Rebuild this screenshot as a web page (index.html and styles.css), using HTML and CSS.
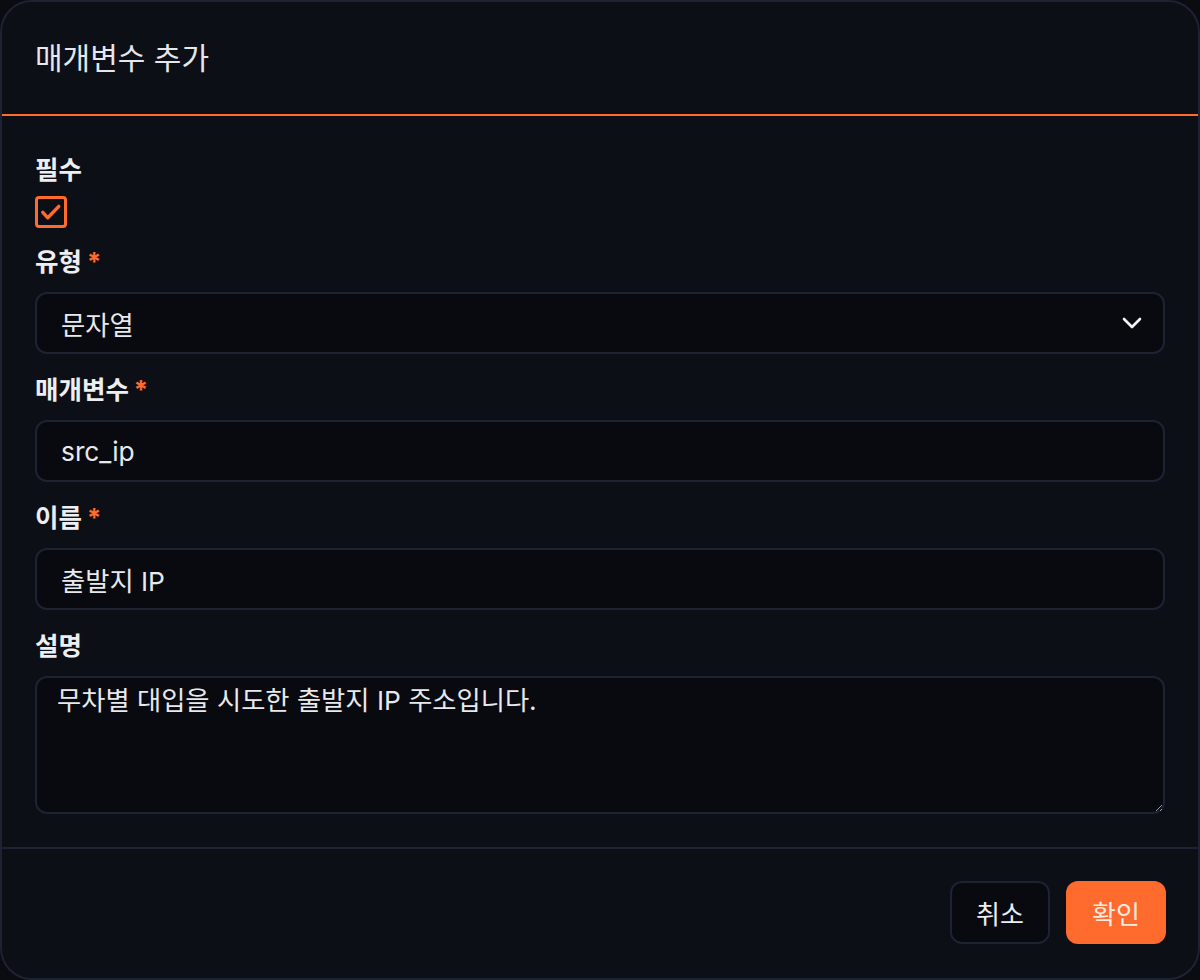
FILE: index.html
```html
<!DOCTYPE html>
<html lang="ko">
<head>
<meta charset="utf-8">
<title>매개변수 추가</title>
<link rel="stylesheet" href="styles.css">
</head>
<body>
<div class="modal">
  <div class="modal-header">
    <h2 class="modal-title">매개변수 추가</h2>
  </div>
  <div class="modal-body">
    <div class="field field-check">
      <span class="label">필수</span>
      <span class="checkbox">
        <svg width="26" height="26" viewBox="0 0 26 26"><polyline points="4.8,13.3 9.8,18.8 20.8,7.4" fill="none" stroke="#ff6b2c" stroke-width="3.4" stroke-linecap="round" stroke-linejoin="round"/></svg>
      </span>
    </div>
    <div class="field">
      <span class="label">유형<span class="req">*</span></span>
      <div class="control select">
        <span>문자열</span>
        <svg class="chevron" width="20" height="12" viewBox="0 0 20 12"><polyline points="2,2 10,10 18,2" fill="none" stroke="#f2f2f2" stroke-width="2.6" stroke-linecap="round" stroke-linejoin="round"/></svg>
      </div>
    </div>
    <div class="field">
      <span class="label">매개변수<span class="req">*</span></span>
      <div class="control">src_ip</div>
    </div>
    <div class="field">
      <span class="label">이름<span class="req">*</span></span>
      <div class="control">출발지 IP</div>
    </div>
    <div class="field">
      <span class="label">설명</span>
      <textarea class="control textarea">무차별 대입을 시도한 출발지 IP 주소입니다.</textarea>
    </div>
  </div>
  <div class="modal-footer">
    <button class="btn btn-cancel">취소</button>
    <button class="btn btn-primary">확인</button>
  </div>
</div>
</body>
</html>
```

FILE: styles.css
```css
* { box-sizing: border-box; }

html, body {
  margin: 0;
  padding: 0;
  background: #0a0c12;
}

body {
  font-family: "Inter", "Noto Sans CJK KR", "Noto Sans", sans-serif;
  color: #e8e9ec;
}

.modal {
  width: 1200px;
  height: 980px;
  border: 2px solid #1d2234;
  border-radius: 32px;
  background: #0c0f16;
  display: flex;
  flex-direction: column;
  overflow: hidden;
}

.modal-header {
  height: 114px;
  border-bottom: 2px solid #ff6b2c;
  padding: 0 33px;
  display: flex;
  align-items: center;
}

.modal-title {
  margin: 0;
  font-size: 30px;
  font-weight: 400;
  line-height: 36px;
  color: #e6e7ea;
}

.modal-body {
  padding: 38px 33px 33px;
  display: flex;
  flex-direction: column;
  gap: 20px;
}

.field {
  display: flex;
  flex-direction: column;
  gap: 14px;
}

.field-check {
  gap: 10px;
  margin-bottom: -2px;
}

.label {
  font-size: 25.5px;
  font-weight: 700;
  line-height: 32px;
  color: #eceef1;
}

.req {
  color: #ff6b2c;
  margin-left: 5px;
}

.checkbox {
  width: 32px;
  height: 32px;
  border: 3px solid #ff6b2c;
  border-radius: 4px;
  display: flex;
  align-items: center;
  justify-content: center;
}

.control {
  height: 62px;
  border: 2px solid #1d2234;
  border-radius: 12px;
  background: #080a10;
  padding: 0 21px 0 24px;
  display: flex;
  align-items: center;
  font-family: inherit;
  font-size: 26.3px;
  color: #e8e9ec;
}

.select {
  justify-content: space-between;
}

.textarea {
  display: block;
  height: 138px;
  padding: 5px 20px;
  line-height: 36px;
  outline: none;
  width: 100%;
}

.modal-footer {
  border-top: 2px solid #1d2234;
  padding: 32px 32px 33px;
  display: flex;
  justify-content: flex-end;
  gap: 16px;
}

.btn {
  width: 100px;
  height: 63px;
  border-radius: 12px;
  font-family: inherit;
  font-size: 26px;
  font-weight: 400;
  cursor: pointer;
}

.btn-cancel {
  background: #080a10;
  border: 2px solid #1d2234;
  color: #eceef1;
}

.btn-primary {
  background: #ff6b2c;
  border: none;
  color: #fbeae2;
}
```
